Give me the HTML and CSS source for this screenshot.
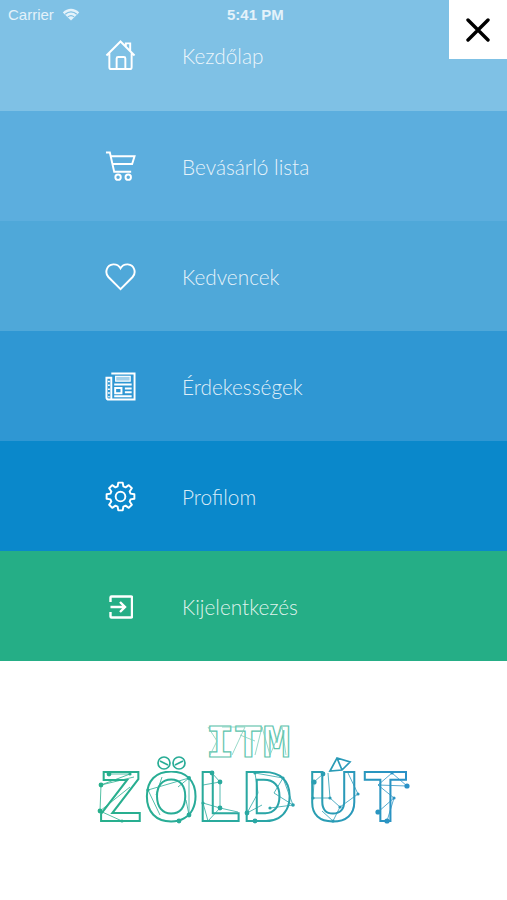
FILE: index.html
```html
<!DOCTYPE html>
<html lang="en">
<head>
    <meta charset="UTF-8">
    <meta name="viewport" content="width=device-width, initial-scale=1.0">
    <title>ITM Zöld Út</title>
    <link rel="stylesheet" href="styles.css">
</head>
<body>

    <div class="status-bar">
        <div class="status-left">
            <span>Carrier</span>
            <svg class="wifi" width="18" height="13" viewBox="0 0 18 13">
                <path d="M9 12.5 L0.8 4.4 C5.4 -0.4 12.6 -0.4 17.2 4.4 Z" fill="#e4f2fa"/>
                <path d="M3.2 6.2 C6.6 3 11.4 3 14.8 6.2" fill="none" stroke="#7fc1e5" stroke-width="1.2"/>
                <path d="M5.8 8.9 C7.8 7.2 10.2 7.2 12.2 8.9" fill="none" stroke="#7fc1e5" stroke-width="1.2"/>
            </svg>
        </div>
        <div class="status-time">5:41 PM</div>
    </div>

    <button class="close-btn" aria-label="Close">
        <svg width="24" height="24" viewBox="0 0 24 24">
            <path d="M2 2 L22 22 M22 2 L2 22" fill="none" stroke="#000" stroke-width="3.4" stroke-linecap="round"/>
        </svg>
    </button>

    <nav class="menu">
        <a class="menu-item item-home">
            <svg class="menu-icon" viewBox="0 0 32 32">
                <path d="M1.5 16 L16 1.5 L30.5 16 M4.5 13 V28 Q4.5 30 6.5 30 H25.5 Q27.5 30 27.5 28 V13 M12 30 V19 Q12 17.5 13.5 17.5 H19.5 Q21 17.5 21 19 V30 M21.5 7 V3.5 H26 V11.5"/>
            </svg>
            <span>Kezdőlap</span>
        </a>
        <a class="menu-item item-cart">
            <svg class="menu-icon" viewBox="0 0 32 32">
                <path d="M1 1.5 H5 L9.5 21.5 H27 M6 5.5 H30.5 L28 13.5 H8"/>
                <circle cx="13.5" cy="27" r="2.8"/>
                <circle cx="24" cy="27" r="2.8"/>
            </svg>
            <span>Bevásárló lista</span>
        </a>
        <a class="menu-item item-fav">
            <svg class="menu-icon" viewBox="0 0 32 32">
                <path d="M16 29 L3.5 16.5 C-0.5 12 1.5 4 8.5 3.5 C12 3.3 14.5 5 16 7.5 C17.5 5 20 3.3 23.5 3.5 C30.5 4 32.5 12 28.5 16.5 Z"/>
            </svg>
            <span>Kedvencek</span>
        </a>
        <a class="menu-item item-news">
            <svg class="menu-icon" viewBox="0 0 32 32">
                <path d="M6.5 2.5 H30.5 V29.5 H4 C2.5 29.5 1.5 28.5 1.5 27 V7 H6.5 V29"/>
                <path class="news-dots" d="M4 10 V27"/>
                <rect class="news-head" x="11" y="5.5" width="15" height="5"/>
                <path d="M9.5 14 H27.5 M20.5 18 H27.5 M20.5 22 H27.5 M9.5 26 H27.5 M10.5 17.5 H17 V23 H10.5 Z"/>
            </svg>
            <span>Érdekességek</span>
        </a>
        <a class="menu-item item-profile">
            <svg class="menu-icon" viewBox="0 0 32 32">
                <path class="gear" d="M26.38 13.02 L30.32 13.73 V18.27 L26.38 18.98 L25.45 21.23 L27.73 24.52 L24.52 27.73 L21.23 25.45 L18.98 26.38 L18.27 30.32 H13.73 L13.02 26.38 L10.77 25.45 L7.48 27.73 L4.27 24.52 L6.55 21.23 L5.62 18.98 L1.68 18.27 V13.73 L5.62 13.02 L6.55 10.77 L4.27 7.48 L7.48 4.27 L10.77 6.55 L13.02 5.62 L13.73 1.68 H18.27 L18.98 5.62 L21.23 6.55 L24.52 4.27 L27.73 7.48 L25.45 10.77 Z"/>
                <circle cx="16" cy="16" r="5"/>
            </svg>
            <span>Profilom</span>
        </a>
        <a class="menu-item item-logout">
            <svg class="menu-icon icon-small" viewBox="0 0 24 24">
                <path d="M1.5 7 V2.5 C1.5 1.8 2 1.5 2.5 1.5 H22 C22.5 1.5 23 1.8 23 2.5 V21.5 C23 22.2 22.5 22.5 22 22.5 H2.5 C2 22.5 1.5 22.2 1.5 21.5 V17"/>
                <path d="M1.5 12 H16 M11 7 L16 12 L11 17"/>
            </svg>
            <span>Kijelentkezés</span>
        </a>
    </nav>

    <div class="logo">
        <svg width="330" height="120" viewBox="0 0 330 120">
            <defs>
                <linearGradient id="logoGrad" gradientUnits="userSpaceOnUse" x1="0" y1="0" x2="330" y2="0">
                    <stop offset="0" stop-color="#27b08a"/>
                    <stop offset="0.45" stop-color="#2aa9a0"/>
                    <stop offset="1" stop-color="#2a8fca"/>
                </linearGradient>
            </defs>
            <text class="logo-top" x="116" y="42">ITM</text>
            <text class="logo-main" x="9 54 108 152 205 218 274" y="106">ZÖLD ÚT</text>

            <!-- white patches over the font's accents, the logo draws its own -->
            <rect class="logo-patch" x="60" y="38" width="44" height="18"/>
            <rect class="logo-patch" x="232" y="38" width="32" height="18"/>
            <g class="logo-accents">
                <circle cx="74" cy="48" r="6"/>
                <circle cx="89" cy="48" r="6"/>
                <path d="M70 46 L78 50 M85 50 L93 46 M240 56 L247 43 L260 47 L252 55 Z M247 43 L252 55"/>
            </g>

            <g class="logo-lines">
                <path d="M19 59 H40 L11 70 L44 62 M11 70 L10 96 L32 106 M10 96 L40 72"/>
                <path d="M58 75 L99 63 L88 72 M58 75 L70 100 M72 62 L66 80 M99 63 L99 100 L89 106 M96 85 L99 100"/>
                <path d="M122 58 L130 67 L130 93 L113 88 M113 70 L130 67 M130 93 L148 97 M113 88 L118 106 L130 93"/>
                <path d="M157 98 L168 78 L165 58 M165 58 L193 63 L184 78 L203 90 L180 93 M193 63 L203 90 M157 98 L172 90"/>
                <path d="M224 67 L233 59 M224 67 L223 83 L240 83 L250 92 L268 79 M243 106 L250 92 M243 106 L232 96 M240 83 L238 58 M268 79 L258 58"/>
                <path d="M302 58 L288 70 L304 83 L288 97 M302 58 L317 71 M304 83 L297 106 M288 70 L317 71"/>
                <path class="logo-lines-top" d="M118 12 L127 26 L120 40 M132 12 L155 12 L142 40 M165 40 L172 12 L180 40 L192 12 L196 40 M150 20 L165 26"/>
            </g>
            <g class="logo-dots">
                <circle cx="19" cy="59" r="2.4"/>
                <circle cx="40" cy="59" r="1.6"/>
                <circle cx="11" cy="70" r="2.4"/>
                <circle cx="10" cy="96" r="2.4"/>
                <circle cx="32" cy="106" r="1.6"/>
                <circle cx="58" cy="75" r="1.6"/>
                <circle cx="99" cy="63" r="2"/>
                <circle cx="99" cy="100" r="2.4"/>
                <circle cx="89" cy="106" r="2.4"/>
                <circle cx="122" cy="58" r="2.4"/>
                <circle cx="130" cy="67" r="2.4"/>
                <circle cx="130" cy="93" r="2.4"/>
                <circle cx="113" cy="88" r="1.6"/>
                <circle cx="157" cy="98" r="2.4"/>
                <circle cx="165" cy="106" r="2.4"/>
                <circle cx="165" cy="58" r="1.6"/>
                <circle cx="193" cy="63" r="1.6"/>
                <circle cx="203" cy="90" r="1.8"/>
                <circle cx="180" cy="93" r="1.6"/>
                <circle cx="233" cy="59" r="2.4"/>
                <circle cx="224" cy="67" r="2.6"/>
                <circle cx="223" cy="83" r="1.6"/>
                <circle cx="240" cy="83" r="1.6"/>
                <circle cx="250" cy="92" r="1.6"/>
                <circle cx="268" cy="79" r="1.6"/>
                <circle cx="243" cy="106" r="1.6"/>
                <circle cx="302" cy="58" r="1.6"/>
                <circle cx="317" cy="71" r="2.6"/>
                <circle cx="304" cy="83" r="1.6"/>
                <circle cx="288" cy="97" r="2.6"/>
                <circle cx="297" cy="106" r="2.6"/>
            </g>
        </svg>
    </div>

</body>
</html>
```

FILE: styles.css
```css
* {
    box-sizing: border-box;
}
body {
    margin: 0;
    height: 900px;
    background-color: #fff;
    font-family: "Lato", "Liberation Sans", sans-serif;
    overflow: hidden;
    position: relative;
}
.status-bar {
    position: absolute;
    top: 0;
    left: 0;
    width: 100%;
    height: 28px;
    display: flex;
    align-items: center;
    padding-left: 8px;
    color: #e4f2fa;
    font-family: "Liberation Sans", sans-serif;
    font-size: 15px;
}
.status-left {
    display: flex;
    align-items: center;
    gap: 8px;
}
.status-time {
    position: absolute;
    left: 227px;
    font-weight: bold;
}
.close-btn {
    position: absolute;
    top: 0;
    right: 0;
    width: 58px;
    height: 59px;
    border: none;
    padding: 0;
    background-color: #fff;
    display: flex;
    align-items: center;
    justify-content: center;
}
.menu {
    display: flex;
    flex-direction: column;
}
.menu-item {
    height: 110px;
    display: flex;
    align-items: center;
    padding-left: 105px;
    color: rgba(255, 255, 255, 0.86);
    font-size: 20.8px;
    font-weight: 300;
}
.menu-icon {
    width: 31px;
    height: 31px;
    margin-right: 46px;
    fill: none;
    stroke: #fff;
    stroke-width: 2;
}
.icon-small {
    width: 24px;
    height: 24px;
    margin-top: 2px;
    margin-left: 4px;
    margin-right: 49px;
    stroke-width: 2.4;
}
.news-head {
    fill: #fff;
    fill-opacity: 0.55;
    stroke-width: 1.2;
}
.news-dots {
    stroke-dasharray: 1.5 2.5;
}
.gear {
    stroke-linejoin: round;
}
.item-home {
    height: 111px;
    background-color: #7fc1e5;
}
.item-cart {
    background-color: #5caede;
}
.item-fav {
    background-color: #4fa8d9;
}
.item-news {
    background-color: #2f97d3;
}
.item-profile {
    background-color: #0a88cb;
}
.item-logout {
    background-color: #25ae86;
}
.logo {
    padding-top: 54px;
    padding-left: 90px;
}
.logo-top, .logo-main {
    font-weight: bold;
    fill: #fff;
}
.logo-top {
    font-family: "Liberation Mono", monospace;
    font-size: 47px;
    stroke: #5cc4ae;
    stroke-width: 1.2;
}
.logo-main {
    font-family: "Liberation Sans", sans-serif;
    font-size: 70px;
    stroke: url(#logoGrad);
    stroke-width: 2;
}
.logo-patch {
    fill: #fff;
}
.logo-accents {
    fill: none;
    stroke: url(#logoGrad);
    stroke-width: 1.7;
}
.logo-lines {
    fill: none;
    stroke: url(#logoGrad);
    stroke-width: 0.8;
}
.logo-lines-top {
    stroke: #7fd0bd;
}
.logo-dots {
    fill: url(#logoGrad);
}
```
